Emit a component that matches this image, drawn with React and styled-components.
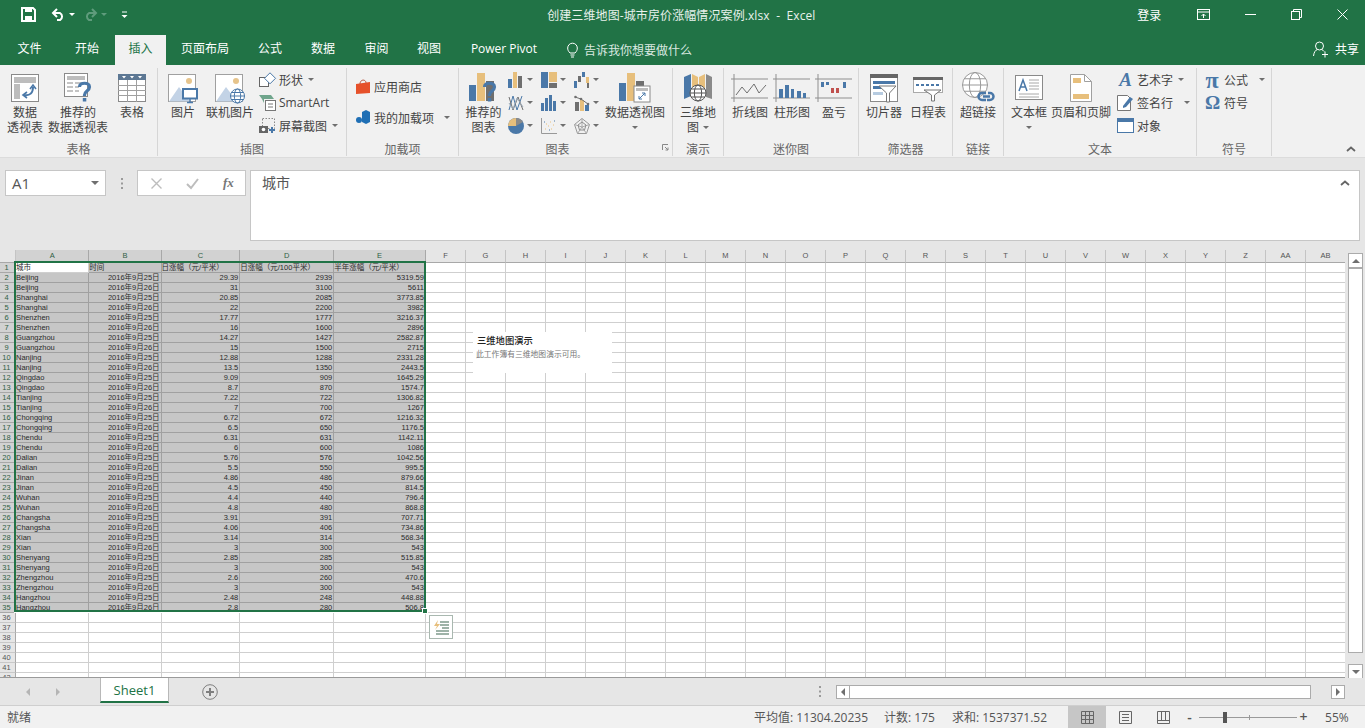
import React from 'react';
import styled, { createGlobalStyle } from 'styled-components';

const BLUE = '#4a78a8';
const ORANGE = '#e7bf7c';
const GREY = '#6f6f6f';
const FRAME = '#8a8a8a';

const GlobalStyle = createGlobalStyle`
  html, body { margin: 0; padding: 0; background: #e6e6e6; overflow: hidden; }
  * { box-sizing: border-box; }
  body { font-family: "Open Sans", "Noto Sans CJK SC", sans-serif; font-size: 12px; color: #444; }
`;

const Window = styled.div`
  width: 1365px;
  height: 728px;
  display: flex;
  flex-direction: column;
  overflow: hidden;
`;

/* title bar */
const TitleBar = styled.div`
  height: 35px;
  flex: none;
  background: #217346;
  color: #fff;
  display: flex;
  align-items: center;
  padding-bottom: 6px;
`;

const Qat = styled.div`
  width: 522px;
  padding-left: 21px;
  display: flex;
  align-items: center;
`;

const QatItem = styled.div`
  display: flex;
  align-items: center;
  margin-right: ${(p) => p.$gap || 0}px;
`;

const Title = styled.div`
  width: 320px;
  text-align: center;
  font-size: 12px;
  letter-spacing: 0.1px;
  white-space: pre;
  color: #e8f1ec;
`;

const Login = styled.div`
  margin-left: 296px;
  width: 24px;
  white-space: nowrap;
`;

const WinButton = styled.div`
  width: 46px;
  display: flex;
  justify-content: center;
  margin-left: ${(p) => p.$gap || 0}px;
`;

/* tab row */
const TabRow = styled.div`
  height: 30px;
  flex: none;
  background: #217346;
  display: flex;
  color: #fff;
`;

const Tab = styled.div`
  width: ${(p) => p.$w}px;
  height: 30px;
  line-height: 28px;
  text-align: center;
  white-space: nowrap;
  background: ${(p) => (p.$active ? '#f1f1f1' : 'transparent')};
  color: ${(p) => (p.$active ? '#217346' : '#fff')};
  font-size: 12px;
`;

const TellMe = styled.div`
  display: flex;
  align-items: center;
  gap: 6px;
  margin-left: 14px;
  height: 30px;
  color: #dbe9e1;
`;

const Share = styled.div`
  margin-left: auto;
  padding-right: 6px;
  display: flex;
  align-items: center;
  gap: 7px;
  height: 28px;
`;

/* ribbon */
const Ribbon = styled.div`
  height: 93px;
  flex: none;
  background: #f1f1f1;
  display: flex;
  border-bottom: 1px solid #dcdcdc;
`;

const Group = styled.div`
  width: ${(p) => p.$w}px;
  height: 88px;
  margin-top: 3px;
  border-right: 1px solid #d6d6d6;
  display: flex;
  flex-direction: column;
  flex: none;
`;

const GroupBody = styled.div`
  height: 74px;
  display: flex;
  padding-left: ${(p) => p.$pad || 0}px;
`;

const GroupLabel = styled.div`
  position: relative;
  height: 14px;
  line-height: 16px;
  text-align: center;
  color: #666;
  padding-right: ${(p) => p.$shift || 0}px;
`;

const Launcher = styled.div`
  position: absolute;
  right: 3px;
  top: 2px;
`;

const LargeButton = styled.div`
  width: ${(p) => p.$w}px;
  flex: none;
  display: flex;
  flex-direction: column;
  align-items: center;
  padding-top: 3px;
`;

const IconSlot = styled.div`
  height: 34px;
  display: flex;
  align-items: center;
  justify-content: center;
`;

const ButtonLine = styled.div`
  height: 15px;
  line-height: 15px;
  white-space: nowrap;
  display: flex;
  align-items: center;
  gap: 4px;
`;

const SmallColumn = styled.div`
  display: flex;
  flex-direction: column;
  margin-left: ${(p) => p.$gap || 0}px;
  padding-top: ${(p) => p.$top || 0}px;
`;

const SmallButton = styled.div`
  height: ${(p) => p.$h || 23}px;
  display: flex;
  align-items: center;
  gap: ${(p) => p.$gap || 3}px;
  white-space: nowrap;
`;

const Caret = styled.span`
  display: inline-block;
  flex: none;
  width: 0;
  height: 0;
  border-left: 3px solid transparent;
  border-right: 3px solid transparent;
  border-top: 3px solid ${(p) => p.$color || '#6f6f6f'};
  margin-left: ${(p) => p.$gap || 0}px;
`;

const ChartGrid = styled.div`
  display: grid;
  grid-template-columns: repeat(3, 33px);
  grid-auto-rows: 23px;
  align-items: center;
  align-self: flex-start;
  flex: none;
`;

const ChartCell = styled.div`
  display: flex;
  align-items: center;
  gap: 3px;
`;

const GlyphLetter = styled.span`
  width: ${(p) => p.$w || 17}px;
  flex: none;
  text-align: center;
  font-family: "Liberation Serif", serif;
  font-weight: bold;
  font-style: ${(p) => (p.$italic ? 'italic' : 'normal')};
  font-size: ${(p) => p.$size || 17}px;
  line-height: 18px;
  color: ${BLUE};
`;

const Collapse = styled.div`
  margin-left: auto;
  align-self: flex-end;
  padding: 0 9px 5px 0;
`;

/* formula bar */
const FormulaBar = styled.div`
  height: 92px;
  flex: none;
  background: #e6e6e6;
  display: flex;
  align-items: flex-start;
  padding: 12px 5px 0 5px;
`;

const NameBox = styled.div`
  width: 101px;
  height: 26px;
  background: #fff;
  border: 1px solid #c6c6c6;
  display: flex;
  align-items: center;
  justify-content: space-between;
  padding: 0 6px;
  font-size: 15px;
  color: #555;
`;

const Dots = styled.div`
  width: 31px;
  height: 26px;
  display: flex;
  align-items: center;
  justify-content: center;
`;

const FnBox = styled.div`
  width: 109px;
  height: 26px;
  background: #fff;
  border: 1px solid #c6c6c6;
  display: flex;
  align-items: center;
  gap: 24px;
  padding-left: 13px;
`;

const FxLabel = styled.span`
  font-family: "Liberation Serif", serif;
  font-style: italic;
  font-weight: bold;
  font-size: 13px;
  color: #777;
`;

const FormulaInput = styled.div`
  width: 1110px;
  height: 71px;
  margin-left: 4px;
  background: #fff;
  border: 1px solid #c6c6c6;
  display: flex;
  justify-content: space-between;
  padding: 1px 9px 0 11px;
  font-size: 14px;
  color: #555;
`;

const ChevronWrap = styled.div`
  padding-top: 8px;
`;

/* sheet */
const SheetArea = styled.div`
  flex: 1;
  min-height: 0;
  display: flex;
  background: #e6e6e6;
`;

const GridWrap = styled.div`
  position: relative;
  width: 1345px;
  flex: none;
  overflow: hidden;
  border-bottom: 1px solid #9a9a9a;
`;

const Grid = styled.div`
  display: grid;
  grid-template-columns: 16px 73.3px 72.3px 78.7px 94px 91.7px repeat(23, 40px);
  grid-template-rows: 12.7px;
  grid-auto-rows: 10px;
  background: #fff;
`;

const ColHead = styled.div`
  background: ${(p) => (p.$sel ? '#d2d2d2' : '#e6e6e6')};
  border-right: 1px solid ${(p) => (p.$sel ? '#a8a8a8' : '#c4c4c4')};
  border-bottom: 1px solid ${(p) => (p.$sel ? '#217346' : '#a8a8a8')};
  font-family: "Liberation Sans", sans-serif;
  font-size: 7.5px;
  line-height: 11px;
  text-align: center;
  color: ${(p) => (p.$sel ? '#2f5f45' : '#555')};
`;

const RowHead = styled.div`
  background: ${(p) => (p.$sel ? '#d2d2d2' : '#e6e6e6')};
  border-right: 1px solid #a8a8a8;
  border-bottom: 1px solid ${(p) => (p.$sel ? '#a8a8a8' : '#c8c8c8')};
  font-family: "Liberation Sans", sans-serif;
  font-size: 7.5px;
  line-height: 9px;
  text-align: center;
  padding-right: 2px;
  color: ${(p) => (p.$sel ? '#2f5f45' : '#555')};
  overflow: hidden;
`;

const Cell = styled.div`
  background: ${(p) => (p.$sel ? '#c6c6c6' : '#fff')};
  border-right: 1px solid ${(p) => (p.$sel ? '#a0a0a0' : '#cfcfcf')};
  border-bottom: 1px solid ${(p) => (p.$sel ? '#a0a0a0' : '#cfcfcf')};
  font-family: "Liberation Sans", "Noto Sans CJK SC", sans-serif;
  font-size: 7.5px;
  line-height: 9px;
  padding: 0 1px 0 0;
  text-align: ${(p) => (p.$right ? 'right' : 'left')};
  color: #2b2b2b;
  white-space: nowrap;
  overflow: hidden;
`;

const Selection = styled.div`
  position: absolute;
  left: 14px;
  top: 11px;
  width: 412px;
  height: 351px;
  border: 2px solid #217346;
  box-shadow: 0 1px 0 #fff;
  pointer-events: none;
`;

const FillHandle = styled.div`
  position: absolute;
  right: -4px;
  bottom: -4px;
  width: 6px;
  height: 6px;
  background: #217346;
  border: 1px solid #fff;
`;

const QuickAnalysis = styled.div`
  position: absolute;
  left: 429px;
  top: 365px;
  width: 24px;
  height: 24px;
  background: #fff;
  border: 1px solid #a9b8b0;
  display: flex;
  align-items: center;
  justify-content: center;
`;

const TourPanel = styled.div`
  position: absolute;
  left: 473px;
  top: 82px;
  width: 139px;
  height: 41px;
  background: #fff;
  padding: 3px 3px;
`;

const TourTitle = styled.div`
  font-size: 9.3px;
  line-height: 12px;
  font-weight: 500;
  color: #222;
  padding-left: 1px;
`;

const TourText = styled.div`
  margin-top: 1px;
  font-size: 7.8px;
  line-height: 12px;
  color: #777;
  white-space: nowrap;
`;

const VScroll = styled.div`
  flex: 1;
  padding: 3px 2px 0 3px;
  display: flex;
  flex-direction: column;
`;

const ScrollButton = styled.div`
  width: ${(p) => p.$w || 15}px;
  height: ${(p) => p.$h || 15}px;
  flex: none;
  background: #fff;
  border: 1px solid #ababab;
  display: flex;
  align-items: center;
  justify-content: center;
`;

const VThumb = styled.div`
  height: 385px;
  flex: none;
  background: #fff;
  border: 1px solid #ababab;
  margin-bottom: 11px;
`;

/* sheet tabs */
const SheetBar = styled.div`
  height: 28px;
  flex: none;
  background: #e6e6e6;
  display: flex;
  align-items: flex-start;
  border-bottom: 1px solid #cfcfcf;
`;

const NavArrows = styled.div`
  width: 100px;
  height: 27px;
  padding: 0 40px 0 26px;
  display: flex;
  align-items: center;
  justify-content: space-between;
`;

const SheetTab = styled.div`
  width: 69px;
  height: 25px;
  background: #fff;
  border-left: 1px solid #b8b8b8;
  border-right: 1px solid #b8b8b8;
  border-bottom: 2px solid #217346;
  color: #217346;
  font-size: 13px;
  line-height: 25px;
  text-align: center;
`;

const AddSheet = styled.div`
  margin-left: 33px;
  height: 27px;
  display: flex;
  align-items: center;
`;

const SheetDots = styled.div`
  margin-left: 601px;
  width: 17px;
  height: 27px;
  display: flex;
  align-items: center;
`;

const HScroll = styled.div`
  margin-top: 7px;
  width: 509px;
  height: 14px;
  display: flex;
`;

const HThumb = styled.div`
  width: 461px;
  height: 14px;
  background: #fff;
  border: 1px solid #ababab;
  border-left: none;
  margin-right: 20px;
`;

/* status bar */
const StatusBar = styled.div`
  height: 22px;
  flex: none;
  background: #f1f1f1;
  display: flex;
  align-items: center;
  padding-left: 7px;
  color: #555;
`;

const Stat = styled.span`
  margin-left: ${(p) => p.$gap}px;
  white-space: nowrap;
`;

const ViewButton = styled.div`
  width: ${(p) => p.$w}px;
  height: 22px;
  margin-left: ${(p) => p.$gap || 0}px;
  background: ${(p) => (p.$active ? '#c6c6c6' : 'transparent')};
  display: flex;
  align-items: center;
  justify-content: center;
  flex: none;
`;

const ZoomTrack = styled.div`
  position: relative;
  width: 98px;
  height: 1px;
  margin: 0 1px 0 4px;
  background: #9a9a9a;
`;

const ZoomThumb = styled.div`
  position: absolute;
  left: 24px;
  top: -5px;
  width: 4px;
  height: 11px;
  background: #555;
`;

const ZoomTick = styled.div`
  position: absolute;
  left: 50px;
  top: -2px;
  width: 1px;
  height: 5px;
  background: #9a9a9a;
`;

const ZoomSign = styled.span`
  font-size: 14px;
  font-weight: 600;
  line-height: 14px;
  width: 11px;
  text-align: center;
  margin-left: ${(p) => p.$gap || 0}px;
`;

const ZoomValue = styled.span`
  margin-left: 16px;
`;

const Svg = styled.svg`
  display: block;
  flex: none;
  overflow: visible;
`;

const Ic = ({ w, h, children }) => (
  <Svg width={w} height={h} viewBox={`0 0 ${w} ${h}`} fill="none">
    {children}
  </Svg>
);

const Save = () => (
  <Ic w={15} h={15}>
    <path d="M1 1h11l2 2v11H1z" stroke="#fff" strokeWidth="2" />
    <rect x="4" y="1" width="7" height="4" fill="#fff" />
    <rect x="4" y="9" width="7" height="5" fill="#fff" />
  </Ic>
);

const Undo = ({ color }) => (
  <Ic w={15} h={13}>
    <path d="M2 5h7a4 4 0 0 1 0 7H6" stroke={color} strokeWidth="2" />
    <path d="M6 1L2 5l4 4" stroke={color} strokeWidth="2" />
  </Ic>
);

const Redo = ({ color }) => (
  <Ic w={15} h={13}>
    <path d="M13 5H6a4 4 0 0 0 0 7h3" stroke={color} strokeWidth="2" />
    <path d="M9 1l4 4-4 4" stroke={color} strokeWidth="2" />
  </Ic>
);

const Customize = () => (
  <Ic w={7} h={8}>
    <path d="M1 1h5" stroke="#fff" />
    <path d="M0.5 4h6L3.5 7z" fill="#fff" />
  </Ic>
);

const DisplayOptions = () => (
  <Ic w={14} h={12}>
    <rect x=".5" y=".5" width="12" height="10" stroke="#fff" />
    <path d="M.5 3h12M6.5 9V5M4.5 7l2-2 2 2" stroke="#fff" />
  </Ic>
);

const Minimize = () => (
  <Ic w={11} h={3}>
    <path d="M0 1.5h11" stroke="#fff" />
  </Ic>
);

const Restore = () => (
  <Ic w={11} h={11}>
    <rect x=".5" y="2.5" width="8" height="8" stroke="#fff" />
    <path d="M2.5 2.5v-2h8v8h-2" stroke="#fff" />
  </Ic>
);

const Close = () => (
  <Ic w={11} h={11}>
    <path d="M.5.5l10 10M10.5.5l-10 10" stroke="#fff" />
  </Ic>
);

const Bulb = () => (
  <Ic w={11} h={15}>
    <path d="M3 10C1 8 .7 6.5.7 5a4.8 4.8 0 0 1 9.6 0c0 1.5-.3 3-2.3 5z" stroke="#fff" />
    <path d="M3.5 12h4M4 14h3" stroke="#fff" />
  </Ic>
);

const Person = () => (
  <Ic w={15} h={16}>
    <circle cx="6.5" cy="5" r="4" stroke="#fff" />
    <path d="M.5 15c.5-4 2-6 4-6.5M8.5 8.5c1 .3 2 1 2.6 2M9 13.5h6M12 10.5v6" stroke="#fff" />
  </Ic>
);

const PivotTable = () => (
  <Ic w={28} h={28}>
    <rect x=".5" y=".5" width="27" height="27" fill="#fff" stroke={FRAME} />
    <rect x="3" y="3" width="22" height="6" fill="#bdbdbd" />
    <rect x="3" y="10" width="6" height="15" fill="#bdbdbd" />
    <path d="M13 21c6 1 9-2 9-8" stroke={BLUE} strokeWidth="2" />
    <path d="M19 15l3-4 3 4M16 18l-4 3 4 3" stroke={BLUE} strokeWidth="1.6" />
  </Ic>
);

const Question = ({ x = 0, y = 0 }) => (
  <g transform={`translate(${x} ${y})`}>
    <path d="M1.5 5c0-5 10-5 10 0 0 4-5 4-5 8v1" stroke={BLUE} strokeWidth="3.2" />
    <rect x="4.8" y="16" width="3.5" height="3.5" fill={BLUE} />
  </g>
);

const RecommendPivot = () => (
  <Ic w={29} h={30}>
    <rect x=".5" y=".5" width="23" height="23" fill="#fff" stroke={FRAME} />
    <rect x="3" y="3" width="18" height="4" fill="#bdbdbd" />
    <path d="M3 9h6v2H3zM3 13h6v2H3zM3 17h6v2H3zM11 9h8v2h-8zM11 13h4v2h-4zM11 17h4v2h-4z" fill="#c4c4c4" />
    <Question x={14} y={9} />
  </Ic>
);

const TableIcon = () => (
  <Ic w={28} h={28}>
    <rect x=".5" y=".5" width="27" height="27" fill="#fff" stroke={FRAME} />
    <rect x="0" y="0" width="28" height="6" fill="#5d7894" />
    <path d="M4 2h4L6 4.5zM12 2h4l-2 2.5zM20 2h4l-2 2.5z" fill="#fff" />
    <path d="M0 11.5h28M0 16.5h28M0 21.5h28M9.5 6v22M18.5 6v22" stroke="#a0a0a0" />
  </Ic>
);

const Landscape = ({ children }) => (
  <Ic w={30} h={29}>
    <rect x=".5" y=".5" width="27" height="27" fill="#fff" stroke="#a0a0a0" />
    <circle cx="21" cy="7" r="3" fill="#e6c48c" />
    <path d="M1 27.5L11 13l11 14.5z" fill="#c3d3e6" />
    {children}
  </Ic>
);

const Picture = () => (
  <Landscape>
    <rect x="15" y="15" width="14" height="9.5" fill="#fff" stroke={BLUE} strokeWidth="2" />
    <path d="M22 25v3M19 28.5h6" stroke={BLUE} strokeWidth="1.5" />
  </Landscape>
);

const Globe = ({ cx, cy, r, color }) => (
  <g stroke={color}>
    <circle cx={cx} cy={cy} r={r} fill="#fff" />
    <ellipse cx={cx} cy={cy} rx={r / 2.2} ry={r} />
    <path d={`M${cx - r} ${cy}h${r * 2}M${cx - r * 0.85} ${cy - r / 2}h${r * 1.7}M${cx - r * 0.85} ${cy + r / 2}h${r * 1.7}`} />
  </g>
);

const OnlinePicture = () => (
  <Landscape>
    <Globe cx={22.5} cy={22} r={7} color={BLUE} />
  </Landscape>
);

const Shapes = () => (
  <Ic w={17} h={16}>
    <rect x=".5" y="5.5" width="9" height="9" fill="#fff" stroke="#666" />
    <path d="M11 .8l5.5 5.5-5.5 5.5-5.5-5.5z" fill="#fff" stroke={BLUE} />
  </Ic>
);

const SmartArtIcon = () => (
  <Ic w={17} h={17}>
    <path d="M0 1h12l3 4H5v4L3 5z" fill="#6fa58c" />
    <rect x="6.5" y="6.5" width="10" height="10" fill="#fff" stroke="#777" />
    <path d="M9 10h5M9 13h5" stroke="#777" />
  </Ic>
);

const Screenshot = () => (
  <Ic w={17} h={16}>
    <rect x="3.5" y=".5" width="12" height="10" stroke="#888" strokeDasharray="1.5 1.5" />
    <rect x="0" y="8" width="9" height="7" fill="#666" />
    <circle cx="4.5" cy="11.5" r="1.8" fill="#fff" />
    <path d="M13 9v6M10 12h6" stroke={BLUE} strokeWidth="2" />
  </Ic>
);

const Store = () => (
  <Ic w={15} h={16}>
    <path d="M0 5l14-2v11L0 15z" fill="#e6512a" />
    <path d="M4 5c0-5 6-5 6-1" stroke="#b8513a" />
  </Ic>
);

const Addins = () => (
  <Ic w={15} h={15}>
    <path d="M6 2l4-2 4 2v10l-4 2-4-2z" fill="#1f6fb5" />
    <circle cx="3" cy="10" r="3" fill="#1f6fb5" />
  </Ic>
);

const Bars = ({ items, w = 16, h = 16 }) => (
  <Ic w={w} h={h}>
    {items.map(([x, y, bw, fill], i) => (
      <rect key={i} x={x} y={y} width={bw} height={h - y} fill={fill} />
    ))}
  </Ic>
);

const Hierarchy = () => (
  <Ic w={16} h={16}>
    <rect x="0" y="0" width="7" height="16" fill={BLUE} />
    <rect x="8" y="0" width="8" height="10" fill={ORANGE} />
    <rect x="8" y="11" width="8" height="5" fill={GREY} />
  </Ic>
);

const Waterfall = () => (
  <Ic w={16} h={16}>
    <rect x="0" y="9" width="3" height="7" fill={BLUE} />
    <rect x="4" y="4" width="3" height="6" fill={GREY} />
    <rect x="8" y="0" width="3" height="5" fill={BLUE} />
    <rect x="12" y="5" width="3" height="6" fill={ORANGE} />
    <path d="M13 11h2v5h-2z" fill={GREY} />
  </Ic>
);

const LineChart = () => (
  <Ic w={16} h={16}>
    <path d="M1 15L5 1l4 14 5-14" stroke={BLUE} />
    <path d="M1 2l4 13 5-13 5 13" stroke={GREY} />
    <path d="M1 8l4 6 4-11 6 9" stroke="#9aa9b8" />
  </Ic>
);

const Combo = () => (
  <Ic w={16} h={16}>
    <rect x="1" y="7" width="4" height="9" fill={GREY} />
    <rect x="6" y="5" width="4" height="11" fill={ORANGE} />
    <rect x="11" y="10" width="4" height="6" fill={BLUE} />
    <path d="M1 2l6 2 7 5" stroke={GREY} />
    <circle cx="1.5" cy="2" r="1.3" fill={GREY} />
    <circle cx="7" cy="4" r="1.3" fill={GREY} />
    <circle cx="14" cy="9" r="1.3" fill={GREY} />
  </Ic>
);

const Pie = () => (
  <Ic w={16} h={16}>
    <circle cx="8" cy="8" r="8" fill={BLUE} />
    <path d="M8 8V0A8 8 0 0 0 0 8z" fill={ORANGE} />
    <path d="M8 8V0a8 8 0 0 1 7 4z" fill="#8a8a8a" />
  </Ic>
);

const Scatter = () => (
  <Ic w={16} h={16}>
    <path d="M.5 0v15.5H16" stroke="#999" />
    <path d="M4 11h1M7 8h1M9 4h1M12 7h1M5 6h1M10 11h1" stroke={ORANGE} />
    <path d="M3 4h1M8 12h1M13 3h1" stroke={BLUE} />
  </Ic>
);

const Radar = () => (
  <Ic w={16} h={16}>
    <path d="M8 .5l7.5 6-3 9H3.500l-3-9z" stroke="#999" />
    <path d="M8 .5V9M15.5 6.5L8 9M12.5 15.5L8 9M3.500 15.5L8 9M.5 6.5L8 9" stroke="#aaa" />
    <path d="M8 4l4 3-1.500 5h-5L4 7z" stroke="#8f8f8f" />
  </Ic>
);

const BigChart = ({ children }) => (
  <Ic w={29} h={30}>
    <rect x="0" y="12" width="7" height="16" fill={BLUE} />
    <rect x="8" y="0" width="8" height="28" fill={ORANGE} />
    <rect x="17" y="8" width="8" height="20" fill={GREY} />
    {children}
  </Ic>
);

const PivotChart = () => (
  <Ic w={32} h={30}>
    <rect x="0" y="10" width="7" height="18" fill={BLUE} />
    <rect x="8" y="0" width="8" height="28" fill={ORANGE} />
    <rect x="17" y="8" width="8" height="20" fill={GREY} />
    <rect x="15" y="13" width="16" height="16" fill="#fff" stroke={FRAME} />
    <rect x="17" y="15" width="12" height="3" fill="#bdbdbd" />
    <path d="M20 26l6-6M23 20h3v3M20 23v3h3" stroke={BLUE} />
  </Ic>
);

const Map3D = () => (
  <Ic w={30} h={30}>
    <path d="M1 4l7-3v22l-7 3z" fill={BLUE} />
    <path d="M9 1l6 3v20l-6-3z" fill={ORANGE} />
    <path d="M16 4l6-3v24l-6 -1z" fill={ORANGE} />
    <path d="M23 1l6 3v22l-6-2z" fill="#8a8a8a" />
    <Globe cx={15} cy={20} r={8} color="#555" />
  </Ic>
);

const Sparkline = ({ children }) => (
  <Ic w={38} h={28}>
    <path d="M3 0v28M0 5h37M0 24h37" stroke="#8f8f8f" />
    {children}
  </Ic>
);

const Slicer = () => (
  <Ic w={28} h={28}>
    <rect x=".5" y=".5" width="27" height="27" fill="#fff" stroke={FRAME} />
    <rect x="0" y="0" width="28" height="4" fill="#666" />
    <rect x="3" y="7" width="22" height="3" fill={BLUE} />
    <rect x="3" y="12" width="10" height="3" fill={BLUE} />
    <rect x="3" y="18" width="10" height="3" fill="#b6cbe0" />
    <path d="M9 12h17l-6.5 7v9h-3v-9z" fill="#fff" stroke="#777" />
  </Ic>
);

const Timeline = () => (
  <Ic w={30} h={26}>
    <rect x=".5" y="2.5" width="29" height="15" fill="#fff" stroke="#aaa" />
    <rect x="0" y="2" width="30" height="3" fill="#666" />
    <path d="M3 10h3M8 10h3M13 10h3M18 10h3M23 10h3" stroke={BLUE} strokeWidth="2" />
    <path d="M11 15h17l-6.5 5v6h-3v-6z" fill="#fff" stroke="#777" />
  </Ic>
);

const Hyperlink = () => (
  <Ic w={32} h={32}>
    <Globe cx={13} cy={13} r={12.5} color="#999" />
    <path d="M24 21h-4a3.5 3.5 0 0 0 0 7h4M26 21h2a3.5 3.5 0 0 1 0 7h-3M21 24.5h7" stroke={BLUE} strokeWidth="2.5" />
  </Ic>
);

const TextBoxIcon = () => (
  <Ic w={28} h={26}>
    <rect x=".5" y=".5" width="27" height="24" fill="#fff" stroke={FRAME} />
    <path d="M4 16L8 5l4 11M5.5 12h5" stroke={BLUE} strokeWidth="1.5" />
    <path d="M14 5h10M14 8h10M14 11h10M14 14h10M4 19h20M4 22h20" stroke="#a8a8a8" />
  </Ic>
);

const HeaderFooter = () => (
  <Ic w={22} h={28}>
    <path d="M.5.5h14l7 7v20H.5z" fill="#fff" stroke="#a0a0a0" />
    <path d="M14.5.5v7h7" stroke="#a0a0a0" />
    <rect x="3" y="4" width="8" height="5" fill={ORANGE} />
    <rect x="3" y="20" width="16" height="5" fill={ORANGE} />
  </Ic>
);

const Signature = () => (
  <Ic w={17} h={17}>
    <path d="M.5 1.5h10l3 3v12H.5z" fill="#fff" stroke="#777" />
    <path d="M6 12l7-9 3 2-7 8-3 1z" fill={BLUE} />
  </Ic>
);

const ObjectIcon = () => (
  <Ic w={17} h={15}>
    <rect x=".5" y=".5" width="16" height="14" fill="#fff" stroke={BLUE} />
    <rect x="0" y="0" width="17" height="4" fill={BLUE} />
  </Ic>
);

const Chevron = () => (
  <Ic w={10} h={6}>
    <path d="M1 5l4-3.5L9 5" stroke="#666" strokeWidth="1.8" />
  </Ic>
);

const LaunchMark = () => (
  <Ic w={7} h={7}>
    <path d="M.5 6V.5H6" stroke="#888" />
    <path d="M3 3l3 3M6 3.5V6H3.5" stroke="#888" />
  </Ic>
);

const VDots = ({ color = '#9a9a9a' }) => (
  <Ic w={2} h={11}>
    <path d="M1 0v2M1 4.5v2M1 9v2" stroke={color} strokeWidth="2" />
  </Ic>
);

const Arrow = ({ dir, color = '#6f6f6f' }) => {
  const paths = {
    up: 'M0 4l4-4 4 4z',
    down: 'M0 0h8L4 4z',
    left: 'M4 0v8L0 4z',
    right: 'M0 0v8l4-4z',
  };
  const wide = dir === 'up' || dir === 'down';
  return (
    <Ic w={wide ? 8 : 4} h={wide ? 4 : 8}>
      <path d={paths[dir]} fill={color} />
    </Ic>
  );
};

const chartIcons = [
  <Bars items={[[0, 7, 4, BLUE], [5, 0, 4, ORANGE], [10, 4, 4, GREY]]} />,
  <Hierarchy />,
  <Waterfall />,
  <LineChart />,
  <Bars items={[[0, 8, 3, BLUE], [4, 3, 3, BLUE], [8, 0, 3, BLUE], [12, 6, 3, BLUE]]} />,
  <Combo />,
  <Pie />,
  <Scatter />,
  <Radar />,
];

const tabs = [
  ['文件', 59],
  ['开始', 56],
  ['插入', 51, true],
  ['页面布局', 78],
  ['公式', 52],
  ['数据', 54],
  ['审阅', 53],
  ['视图', 52],
  ['Power Pivot', 98],
];

const columns = ['A', 'B', 'C', 'D', 'E', 'F', 'G', 'H', 'I', 'J', 'K', 'L', 'M', 'N', 'O', 'P', 'Q', 'R', 'S', 'T', 'U', 'V', 'W', 'X', 'Y', 'Z', 'AA', 'AB'];

const cities = [
  ['Beijing', 29.39, 2939, 5319.59],
  ['Beijing', 31, 3100, 5611],
  ['Shanghai', 20.85, 2085, 3773.85],
  ['Shanghai', 22, 2200, 3982],
  ['Shenzhen', 17.77, 1777, 3216.37],
  ['Shenzhen', 16, 1600, 2896],
  ['Guangzhou', 14.27, 1427, 2582.87],
  ['Guangzhou', 15, 1500, 2715],
  ['Nanjing', 12.88, 1288, 2331.28],
  ['Nanjing', 13.5, 1350, 2443.5],
  ['Qingdao', 9.09, 909, 1645.29],
  ['Qingdao', 8.7, 870, 1574.7],
  ['Tianjing', 7.22, 722, 1306.82],
  ['Tianjing', 7, 700, 1267],
  ['Chongqing', 6.72, 672, 1216.32],
  ['Chongqing', 6.5, 650, 1176.5],
  ['Chendu', 6.31, 631, 1142.11],
  ['Chendu', 6, 600, 1086],
  ['Dalian', 5.76, 576, 1042.56],
  ['Dalian', 5.5, 550, 995.5],
  ['Jinan', 4.86, 486, 879.66],
  ['Jinan', 4.5, 450, 814.5],
  ['Wuhan', 4.4, 440, 796.4],
  ['Wuhan', 4.8, 480, 868.8],
  ['Changsha', 3.91, 391, 707.71],
  ['Changsha', 4.06, 406, 734.86],
  ['Xian', 3.14, 314, 568.34],
  ['Xian', 3, 300, 543],
  ['Shenyang', 2.85, 285, 515.85],
  ['Shenyang', 3, 300, 543],
  ['Zhengzhou', 2.6, 260, 470.6],
  ['Zhengzhou', 3, 300, 543],
  ['Hangzhou', 2.48, 248, 448.88],
  ['Hangzhou', 2.8, 280, 506.8],
];

const headerRow = ['城市', '时间', '日涨幅（元/平米）', '日涨幅（元/100平米）', '半年涨幅（元/平米）'];

const rowValues = (index) => {
  if (index === 0) return headerRow;
  const item = cities[index - 1];
  if (!item) return [];
  const day = index % 2 === 1 ? 25 : 26;
  return [item[0], `2016年9月${day}日`, item[1], item[2], item[3]];
};

const Large = ({ w, icon, lines }) => (
  <LargeButton $w={w}>
    <IconSlot>{icon}</IconSlot>
    {lines.map((line, i) => (
      <ButtonLine key={i}>{line}</ButtonLine>
    ))}
  </LargeButton>
);

const Sheet = () => {
  const rows = Array.from({ length: 42 }, (_, i) => i);
  return (
    <GridWrap>
      <Grid>
        <ColHead />
        {columns.map((c, i) => (
          <ColHead key={c} $sel={i < 5}>
            {c}
          </ColHead>
        ))}
        {rows.map((r) => {
          const values = rowValues(r);
          return (
            <React.Fragment key={r}>
              <RowHead $sel={r < 35}>{r + 1}</RowHead>
              {columns.map((c, i) => (
                <Cell key={c} $sel={r < 35 && i < 5 && !(r === 0 && i === 0)} $right={r > 0 && i > 0}>
                  {i < 5 ? values[i] : ''}
                </Cell>
              ))}
            </React.Fragment>
          );
        })}
      </Grid>
      <Selection>
        <FillHandle />
      </Selection>
      <QuickAnalysis>
        <Ic w={17} h={17}>
          <path d="M5 1L1 7h3L2 11l5-6H4z" fill="#e7bf7c" />
          <path d="M7 3h9M7 6h9M9 9h7M3 12h13M3 15h13" stroke="#7f9a8c" strokeWidth="1.5" />
        </Ic>
      </QuickAnalysis>
      <TourPanel>
        <TourTitle>三维地图演示</TourTitle>
        <TourText>此工作簿有三维地图演示可用。</TourText>
      </TourPanel>
    </GridWrap>
  );
};

export default function App() {
  return (
    <Window>
      <GlobalStyle />
      <TitleBar>
        <Qat>
          <QatItem $gap={15}>
            <Save />
          </QatItem>
          <QatItem $gap={8}>
            <Undo color="#fff" />
            <Caret $gap={3} $color="#fff" />
          </QatItem>
          <QatItem $gap={14}>
            <Redo color="#5f9c7c" />
            <Caret $gap={3} $color="#5f9c7c" />
          </QatItem>
          <QatItem>
            <Customize />
          </QatItem>
        </Qat>
        <Title>创建三维地图-城市房价涨幅情况案例.xlsx  -  Excel</Title>
        <Login>登录</Login>
        <WinButton $gap={20}>
          <DisplayOptions />
        </WinButton>
        <WinButton>
          <Minimize />
        </WinButton>
        <WinButton>
          <Restore />
        </WinButton>
        <WinButton>
          <Close />
        </WinButton>
      </TitleBar>
      <TabRow>
        {tabs.map(([name, w, active]) => (
          <Tab key={name} $w={w} $active={active}>
            {name}
          </Tab>
        ))}
        <TellMe>
          <Bulb />
          告诉我你想要做什么
        </TellMe>
        <Share>
          <Person />
          共享
        </Share>
      </TabRow>
      <Ribbon>
        <Group $w={158}>
          <GroupBody $pad={3}>
            <Large w={44} icon={<PivotTable />} lines={['数据', '透视表']} />
            <Large w={62} icon={<RecommendPivot />} lines={['推荐的', '数据透视表']} />
            <Large w={46} icon={<TableIcon />} lines={['表格']} />
          </GroupBody>
          <GroupLabel>表格</GroupLabel>
        </Group>
        <Group $w={189}>
          <GroupBody $pad={2}>
            <Large w={46} icon={<Picture />} lines={['图片']} />
            <Large w={48} icon={<OnlinePicture />} lines={['联机图片']} />
            <SmallColumn $gap={5}>
              <SmallButton>
                <Shapes />
                形状
                <Caret $gap={2} />
              </SmallButton>
              <SmallButton>
                <SmartArtIcon />
                SmartArt
              </SmallButton>
              <SmallButton>
                <Screenshot />
                屏幕截图
                <Caret $gap={2} />
              </SmallButton>
            </SmallColumn>
          </GroupBody>
          <GroupLabel>插图</GroupLabel>
        </Group>
        <Group $w={112}>
          <GroupBody $pad={9}>
            <SmallColumn $top={3}>
              <SmallButton $h={31} $gap={3}>
                <Store />
                应用商店
              </SmallButton>
              <SmallButton $h={31} $gap={3}>
                <Addins />
                我的加载项
                <Caret $gap={7} />
              </SmallButton>
            </SmallColumn>
          </GroupBody>
          <GroupLabel>加载项</GroupLabel>
        </Group>
        <Group $w={214}>
          <GroupBody>
            <Large
              w={49}
              icon={
                <BigChart>
                  <Question x={14} y={9} />
                </BigChart>
              }
              lines={['推荐的', '图表']}
            />
            <ChartGrid>
              {chartIcons.map((icon, i) => (
                <ChartCell key={i}>
                  {icon}
                  <Caret />
                </ChartCell>
              ))}
            </ChartGrid>
            <Large w={56} icon={<PivotChart />} lines={['数据透视图', <Caret key="c" />]} />
          </GroupBody>
          <GroupLabel $shift={16}>
            图表
            <Launcher>
              <LaunchMark />
            </Launcher>
          </GroupLabel>
        </Group>
        <Group $w={51}>
          <GroupBody>
            <Large
              w={50}
              icon={<Map3D />}
              lines={[
                '三维地',
                <React.Fragment key="l">
                  图<Caret />
                </React.Fragment>,
              ]}
            />
          </GroupBody>
          <GroupLabel>演示</GroupLabel>
        </Group>
        <Group $w={135}>
          <GroupBody $pad={5}>
            <Large
              w={42}
              icon={
                <Sparkline>
                  <path d="M5 21l6-8 5 6 7-9 5 9 7-8" stroke="#6f6f6f" />
                </Sparkline>
              }
              lines={['折线图']}
            />
            <Large
              w={42}
              icon={
                <Sparkline>
                  <path d="M6 15h4v9H6zM12 11h4v13h-4zM18 15h3v9h-3zM24 17h4v7h-4zM30 19h3v5h-3z" fill={BLUE} />
                </Sparkline>
              }
              lines={['柱形图']}
            />
            <Large
              w={42}
              icon={
                <Sparkline>
                  <path d="M6 8h3v5H6zM11 8h3v3h-3zM28 8h3v6h-3z" fill={BLUE} />
                  <path d="M16 14h3v5h-3zM21 14h3v5h-3z" fill="#c0504d" />
                </Sparkline>
              }
              lines={['盈亏']}
            />
          </GroupBody>
          <GroupLabel>迷你图</GroupLabel>
        </Group>
        <Group $w={94}>
          <GroupBody $pad={3}>
            <Large w={44} icon={<Slicer />} lines={['切片器']} />
            <Large w={44} icon={<Timeline />} lines={['日程表']} />
          </GroupBody>
          <GroupLabel>筛选器</GroupLabel>
        </Group>
        <Group $w={51}>
          <GroupBody>
            <Large w={50} icon={<Hyperlink />} lines={['超链接']} />
          </GroupBody>
          <GroupLabel>链接</GroupLabel>
        </Group>
        <Group $w={193}>
          <GroupBody $pad={1}>
            <Large w={48} icon={<TextBoxIcon />} lines={['文本框', <Caret key="c" />]} />
            <Large w={56} icon={<HeaderFooter />} lines={['页眉和页脚']} />
            <SmallColumn $gap={8}>
              <SmallButton>
                <GlyphLetter $italic $size={19}>
                  A
                </GlyphLetter>
                艺术字
                <Caret $gap={2} />
              </SmallButton>
              <SmallButton>
                <Signature />
                签名行
                <Caret $gap={8} />
              </SmallButton>
              <SmallButton>
                <ObjectIcon />
                对象
              </SmallButton>
            </SmallColumn>
          </GroupBody>
          <GroupLabel>文本</GroupLabel>
        </Group>
        <Group $w={75}>
          <GroupBody $pad={8}>
            <SmallColumn>
              <SmallButton $gap={5}>
                <GlyphLetter $w={14} $size={24}>
                  π
                </GlyphLetter>
                公式
                <Caret $gap={6} />
              </SmallButton>
              <SmallButton $gap={5}>
                <GlyphLetter $w={14} $size={19}>
                  Ω
                </GlyphLetter>
                符号
              </SmallButton>
            </SmallColumn>
          </GroupBody>
          <GroupLabel>符号</GroupLabel>
        </Group>
        <Collapse>
          <Chevron />
        </Collapse>
      </Ribbon>
      <FormulaBar>
        <NameBox>
          A1
          <Arrow dir="down" />
        </NameBox>
        <Dots>
          <VDots />
        </Dots>
        <FnBox>
          <Ic w={11} h={11}>
            <path d="M.5.5l10 10M10.5.5l-10 10" stroke="#bdbdbd" strokeWidth="1.4" />
          </Ic>
          <Ic w={13} h={11}>
            <path d="M1 6l4 4 7-9" stroke="#bdbdbd" strokeWidth="2" />
          </Ic>
          <FxLabel>fx</FxLabel>
        </FnBox>
        <FormulaInput>
          城市
          <ChevronWrap>
            <Chevron />
          </ChevronWrap>
        </FormulaInput>
      </FormulaBar>
      <SheetArea>
        <Sheet />
        <VScroll>
          <ScrollButton>
            <Arrow dir="up" />
          </ScrollButton>
          <VThumb />
          <ScrollButton>
            <Arrow dir="down" />
          </ScrollButton>
        </VScroll>
      </SheetArea>
      <SheetBar>
        <NavArrows>
          <Arrow dir="left" color="#b5b5b5" />
          <Arrow dir="right" color="#b5b5b5" />
        </NavArrows>
        <SheetTab>Sheet1</SheetTab>
        <AddSheet>
          <Ic w={16} h={16}>
            <circle cx="8" cy="8" r="7.3" stroke="#7f7f7f" fill="#e6e6e6" />
            <path d="M8 4v8M4 8h8" stroke="#7f7f7f" strokeWidth="2" />
          </Ic>
        </AddSheet>
        <SheetDots>
          <VDots />
        </SheetDots>
        <HScroll>
          <ScrollButton $w={14} $h={14}>
            <Arrow dir="left" />
          </ScrollButton>
          <HThumb />
          <ScrollButton $w={14} $h={14}>
            <Arrow dir="right" />
          </ScrollButton>
        </HScroll>
      </SheetBar>
      <StatusBar>
        就绪
        <Stat $gap={723}>平均值: 11304.20235</Stat>
        <Stat $gap={16}>计数: 175</Stat>
        <Stat $gap={17}>求和: 1537371.52</Stat>
        <ViewButton $w={38} $gap={21} $active>
          <Ic w={13} h={13}>
            <path d="M.5.5h12v12H.5zM4.5.5v12M8.5.5v12M.5 4.5h12M.5 8.5h12" stroke="#666" />
          </Ic>
        </ViewButton>
        <ViewButton $w={38}>
          <Ic w={13} h={13}>
            <path d="M.5.5h12v12H.5zM3 3.5h7M3 6.5h7M3 9.5h7" stroke="#666" />
          </Ic>
        </ViewButton>
        <ViewButton $w={38}>
          <Ic w={13} h={13}>
            <path d="M.5.5h12v12H.5zM.5 9.5h12M4.5.5v9M8.5.5v9" stroke="#666" />
          </Ic>
        </ViewButton>
        <ZoomSign $gap={2}>-</ZoomSign>
        <ZoomTrack>
          <ZoomThumb />
          <ZoomTick />
        </ZoomTrack>
        <ZoomSign>+</ZoomSign>
        <ZoomValue>55%</ZoomValue>
      </StatusBar>
    </Window>
  );
}
